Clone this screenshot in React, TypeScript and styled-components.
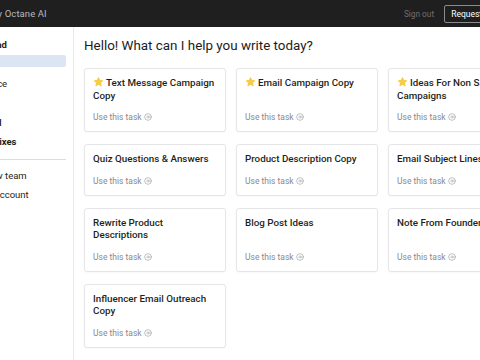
import { createGlobalStyle, styled } from "styled-components";
import { CircleArrowRight } from "lucide-react";

const GlobalStyle = createGlobalStyle`
  html, body {
    margin: 0;
    padding: 0;
    overflow: hidden;
    background: #ffffff;
    font-family: Roboto, "Liberation Sans", Arial, sans-serif;
    -webkit-font-smoothing: antialiased;
  }
`;

const Page = styled.div`
  width: 760px;
  margin-left: -60px;
  min-height: 360px;
  display: flex;
  flex-direction: column;
`;

const TopBar = styled.header`
  height: 27px;
  background-color: #1f1f20;
  display: flex;
  align-items: center;
  padding: 0 16px 0 28px;
`;

const Brand = styled.div`
  font-size: 9.5px;
  color: #b9b9bc;
  letter-spacing: 0.1px;
`;

const TopActions = styled.div`
  margin-left: auto;
  display: flex;
  align-items: center;
  gap: 10px;
  padding-right: 166px;
`;

const SignOut = styled.span`
  font-size: 8.3px;
  color: #6e6e72;
`;

const RequestButton = styled.button`
  height: 18px;
  padding: 0 6px;
  background: transparent;
  border: 1px solid #8b8b8f;
  border-radius: 2px;
  color: #ffffff;
  font-family: inherit;
  font-size: 8.5px;
  white-space: nowrap;
`;

const Body = styled.div`
  display: flex;
  flex: 1;
`;

const Sidebar = styled.nav`
  width: 134px;
  flex-shrink: 0;
  border-right: 1px solid #e9e9eb;
  padding: 8px 7px 0 0;
  box-sizing: border-box;
  min-height: 333px;
`;

const NavItem = styled.div<{ $bold?: boolean; $active?: boolean }>`
  height: 19.5px;
  line-height: 19.5px;
  padding-left: 20px;
  font-size: 9.5px;
  white-space: nowrap;
  color: #1e1e1e;
  font-weight: ${(p) => (p.$bold ? 700 : 400)};
  ${(p) =>
    p.$active &&
    `
    background-color: #dbe5f4;
    height: 12px;
    line-height: 12px;
    margin: 0 0 7px;
    border-radius: 0 2px 2px 0;
  `}
`;

const Divider = styled.hr`
  border: none;
  border-top: 1px solid #dcdcdf;
  margin: 7px 0 6px;
`;

const Main = styled.main`
  flex: 1;
  padding: 9px 10px 16px 10px;
`;

const Heading = styled.h1`
  margin: 0 0 12px;
  font-size: 13.4px;
  font-weight: 400;
  color: #1c1c1e;
  line-height: 20px;
`;

const Grid = styled.div`
  display: grid;
  grid-template-columns: repeat(4, 142px);
  column-gap: 10px;
  row-gap: 12px;
  align-items: stretch;
`;

const Card = styled.div`
  background: #ffffff;
  border: 1px solid #e6e6e8;
  border-radius: 3px;
  box-shadow: 0 1px 2px rgba(0, 0, 0, 0.03);
  padding: 8px 7px 9px 8px;
  display: flex;
  flex-direction: column;
  box-sizing: border-box;
`;

const CardTitle = styled.div`
  font-size: 9.8px;
  line-height: 12.5px;
  color: #1f1f21;
  font-weight: 500;
  margin-bottom: 10px;
`;

const UseLink = styled.div`
  margin-top: auto;
  display: flex;
  align-items: center;
  gap: 2px;
  height: 10px;
  font-size: 8.5px;
  color: #8a8a8e;
  white-space: nowrap;
`;

const Star = () => (
  <svg width="11" height="10" viewBox="0 0 24 23" style={{ marginRight: 2, verticalAlign: "-1px" }}>
    <path
      d="M12 1l3.1 6.6 7.2.9-5.3 5 1.4 7.1L12 17.1 5.6 20.6 7 13.5 1.7 8.5l7.2-.9z"
      fill="#f7cf3b"
      stroke="#e7b52a"
      strokeWidth="1"
      strokeLinejoin="round"
    />
  </svg>
);

const tasks: { title: string; star?: boolean }[] = [
  { title: "Text Message Campaign Copy", star: true },
  { title: "Email Campaign Copy", star: true },
  { title: "Ideas For Non Sales Campaigns", star: true },
  { title: "SMS Welcome Flow", star: true },
  { title: "Quiz Questions & Answers" },
  { title: "Product Description Copy" },
  { title: "Email Subject Lines" },
  { title: "Ad Headlines" },
  { title: "Rewrite Product Descriptions" },
  { title: "Blog Post Ideas" },
  { title: "Note From Founder Copy" },
  { title: "Landing Page Copy" },
  { title: "Influencer Email Outreach Copy" },
];

export default function App() {
  return (
    <>
      <GlobalStyle />
      <Page>
        <TopBar>
          <Brand>Copy by Octane AI</Brand>
          <TopActions>
            <SignOut>Sign out</SignOut>
            <RequestButton>Request access</RequestButton>
          </TopActions>
        </TopBar>
        <Body>
          <Sidebar>
            <NavItem $bold>Launchpad</NavItem>
            <NavItem $active>Home</NavItem>
            <NavItem>Workspace</NavItem>
            <NavItem>Saved</NavItem>
            <NavItem $bold>My Portal</NavItem>
            <NavItem $bold>Speedy Fixes</NavItem>
            <Divider />
            <NavItem>Invite new team</NavItem>
            <NavItem>Change account</NavItem>
          </Sidebar>
          <Main>
            <Heading>Hello! What can I help you write today?</Heading>
            <Grid>
              {tasks.map((t) => (
                <Card key={t.title}>
                  <CardTitle>
                    {t.star && <Star />}
                    {t.title}
                  </CardTitle>
                  <UseLink>
                    Use this task <CircleArrowRight size={8} strokeWidth={1.6} />
                  </UseLink>
                </Card>
              ))}
            </Grid>
          </Main>
        </Body>
      </Page>
    </>
  );
}
